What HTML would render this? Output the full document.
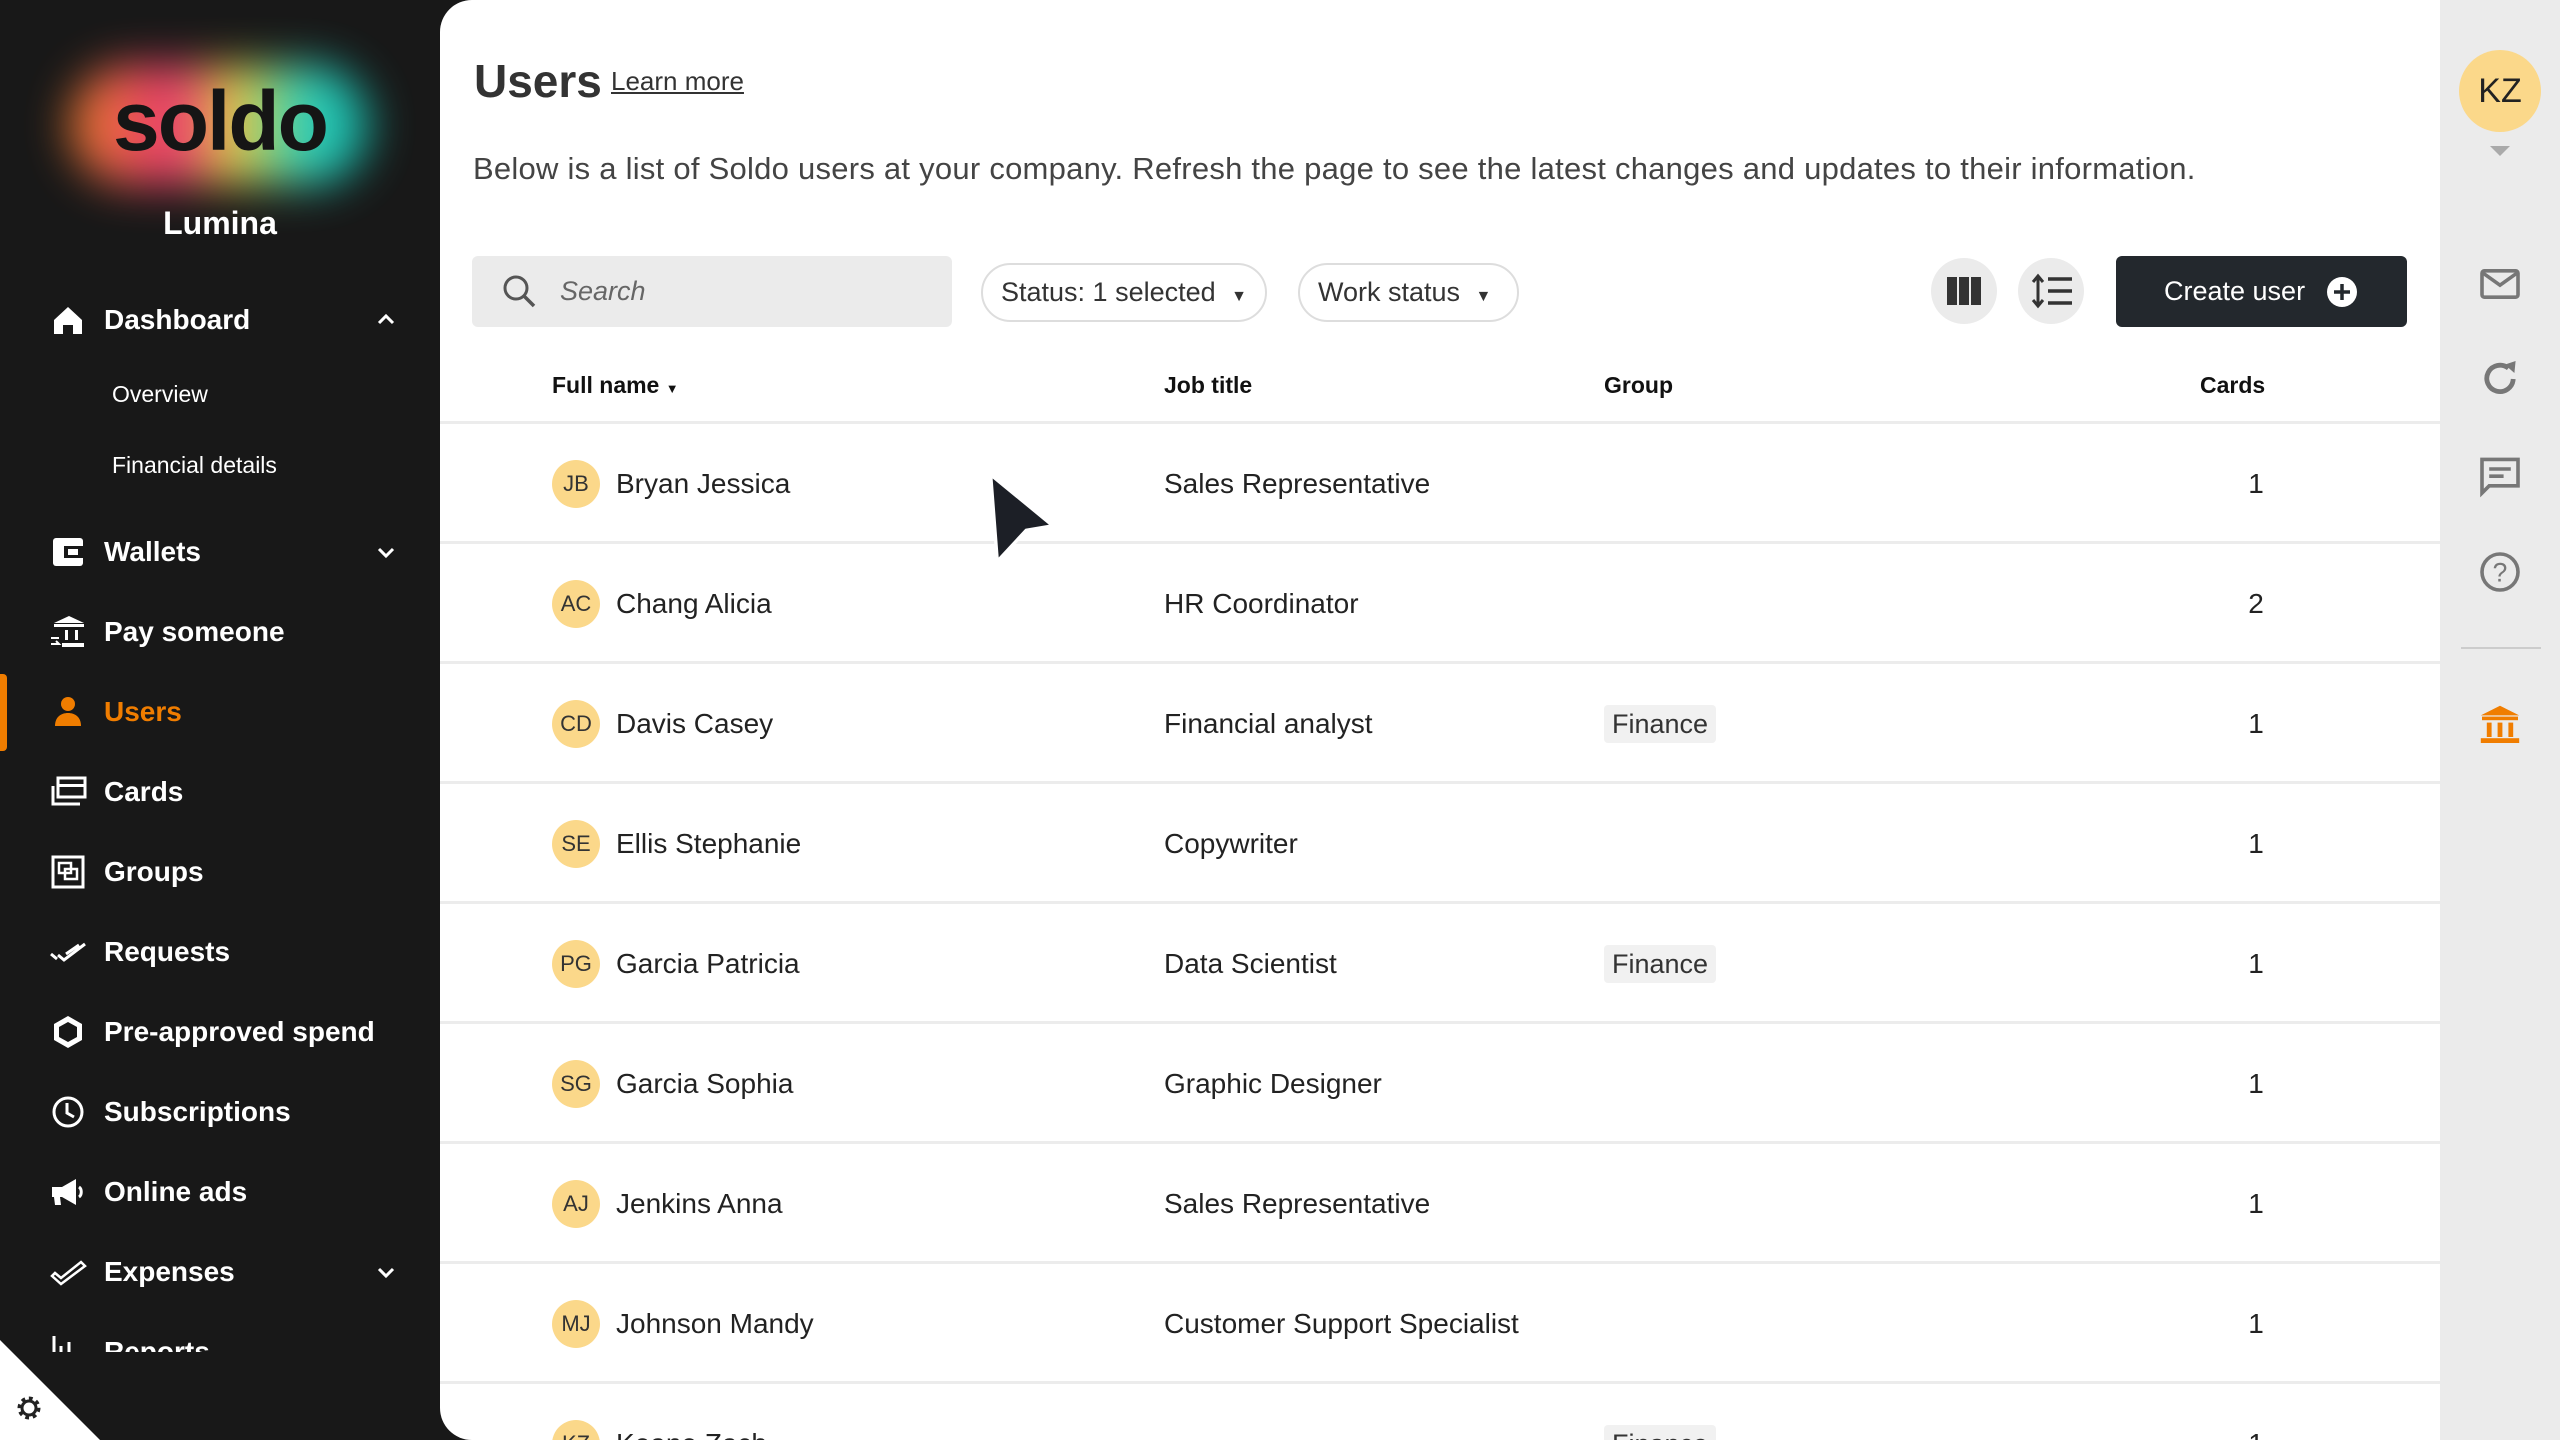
<!DOCTYPE html>
<html><head><meta charset="utf-8"><style>
*{margin:0;padding:0;box-sizing:border-box}
body{width:2560px;height:1440px;overflow:hidden;background:#181818;font-family:"Liberation Sans",sans-serif;position:relative}
.a{position:absolute}
#side{left:0;top:0;width:440px;height:1440px;background:#181818;overflow:hidden}
.nav{position:absolute;left:104px;color:#fff;font-weight:bold;font-size:28px;line-height:40px}
.ic{position:absolute;left:48px;width:40px;height:40px}
.chev{position:absolute;left:372px;width:28px;height:28px}
.sub{position:absolute;left:112px;color:#fff;font-size:23px;line-height:30px}
#main{left:440px;top:0;width:2002px;height:1440px;background:#fff;border-radius:32px 0 0 32px;overflow:hidden}
#right{left:2440px;top:0;width:120px;height:1440px;background:#ebebeb}
.row{position:absolute;left:0;width:2002px;height:120px;border-bottom:3px solid #ececec}
.av{position:absolute;left:112px;top:36px;width:48px;height:48px;border-radius:50%;background:#fbd88a;color:#333;font-size:22px;text-align:center;line-height:48px}
.nm{position:absolute;left:176px;top:44px;font-size:28px;color:#222}
.jt{position:absolute;left:724px;top:44px;font-size:28px;color:#222}
.cd{position:absolute;left:1801px;top:44px;width:30px;text-align:center;font-size:28px;color:#222}
.tag{position:absolute;left:1164px;top:41px;height:38px;padding:0 8px;background:#f1f1f1;font-size:27px;color:#333;line-height:38px;border-radius:4px}
.hd{position:absolute;top:372px;font-size:23px;font-weight:bold;color:#111}
.pill{position:absolute;top:263px;height:59px;border:2px solid #ddd;border-radius:30px;font-size:27px;color:#333;line-height:55px;padding-left:18px}
.ri{position:absolute;left:2476px;width:48px;height:48px}
</style></head><body>
<div id="side" class="a">
  <div class="a" style="left:70px;top:65px;width:300px;height:120px;border-radius:60px;background:linear-gradient(90deg,#ff8a2a,#ff3b7a 35%,#f5e04a 55%,#2be4d0 80%,#14b7a8);filter:blur(22px);opacity:.9"></div>
  <div class="a" style="left:0;top:76px;width:440px;text-align:center;font-size:84px;font-weight:bold;color:#151515;letter-spacing:-2px;line-height:90px">soldo</div>
  <div class="a" style="left:0;top:205px;width:440px;text-align:center;font-size:32px;font-weight:bold;color:#fff">Lumina</div>

  <svg class="ic" style="top:300px" viewBox="0 0 40 40"><path d="M6 20L20 7l14 13v14h-9v-9h-10v9H6z" fill="#fff"/></svg>
  <div class="nav" style="top:300px">Dashboard</div>
  <svg class="chev" style="top:306px" viewBox="0 0 28 28"><path d="M7 17l7-7 7 7" stroke="#fff" stroke-width="3" fill="none"/></svg>
  <div class="sub" style="top:379px">Overview</div>
  <div class="sub" style="top:450px">Financial details</div>

  <svg class="ic" style="top:532px" viewBox="0 0 40 40"><rect x="5" y="6" width="30" height="28" rx="3" fill="#fff"/><rect x="16" y="14" width="19" height="12" fill="#181818"/><rect x="20" y="17" width="10" height="6" fill="#fff"/></svg>
  <div class="nav" style="top:532px">Wallets</div>
  <svg class="chev" style="top:538px" viewBox="0 0 28 28"><path d="M7 11l7 7 7-7" stroke="#fff" stroke-width="3" fill="none"/></svg>

  <svg class="ic" style="top:612px" viewBox="0 0 40 40"><path d="M6 11L21 4l15 7z" fill="#fff"/><rect x="6" y="12" width="30" height="3" fill="#fff"/><rect x="17" y="18" width="3" height="10" fill="#fff"/><rect x="27" y="18" width="3" height="10" fill="#fff"/><rect x="14" y="31" width="22" height="4" fill="#fff"/><path d="M3 26h8M3 32h8l-3-3" stroke="#fff" stroke-width="2" fill="none"/></svg>
  <div class="nav" style="top:612px">Pay someone</div>

  <div class="a" style="left:0;top:674px;width:7px;height:77px;background:#f07d00;border-radius:0 4px 4px 0"></div>
  <svg class="ic" style="top:692px" viewBox="0 0 40 40"><circle cx="20" cy="12" r="7" fill="#f07d00"/><path d="M7 34c0-9 6-13 13-13s13 4 13 13z" fill="#f07d00"/></svg>
  <div class="nav" style="top:692px;color:#f07d00">Users</div>

  <svg class="ic" style="top:772px" viewBox="0 0 40 40"><rect x="10" y="6" width="27" height="19" fill="none" stroke="#fff" stroke-width="3"/><rect x="10" y="12" width="27" height="3" fill="#fff"/><path d="M5 14v18h27" stroke="#fff" stroke-width="3" fill="none"/></svg>
  <div class="nav" style="top:772px">Cards</div>

  <svg class="ic" style="top:852px" viewBox="0 0 40 40"><rect x="5" y="5" width="30" height="30" fill="none" stroke="#fff" stroke-width="3"/><rect x="11" y="11" width="12" height="10" fill="none" stroke="#fff" stroke-width="2.5"/><rect x="17" y="17" width="12" height="10" fill="none" stroke="#fff" stroke-width="2.5"/></svg>
  <div class="nav" style="top:852px">Groups</div>

  <svg class="ic" style="top:932px" viewBox="0 0 40 40"><path d="M3 22l6 5M10 23l6 5L37 12M18 22l13-9" stroke="#fff" stroke-width="3" fill="none"/></svg>
  <div class="nav" style="top:932px">Requests</div>

  <svg class="ic" style="top:1012px" viewBox="0 0 40 40"><path d="M20 4l14 8v16l-14 8-14-8V12z" fill="#fff"/><path d="M20 10l9 5v10l-9 5-9-5V15z" fill="#181818"/></svg>
  <div class="nav" style="top:1012px">Pre-approved spend</div>

  <svg class="ic" style="top:1092px" viewBox="0 0 40 40"><circle cx="20" cy="20" r="14" fill="none" stroke="#fff" stroke-width="3"/><path d="M19 11v10l7 4" stroke="#fff" stroke-width="3" fill="none"/></svg>
  <div class="nav" style="top:1092px">Subscriptions</div>

  <svg class="ic" style="top:1172px" viewBox="0 0 40 40"><path d="M4 15h10l14-8v26l-14-8h-2l1 8H7l-1-8H4z" fill="#fff"/><path d="M31 15c3 2 3 8 0 10" stroke="#fff" stroke-width="3" fill="none"/></svg>
  <div class="nav" style="top:1172px">Online ads</div>

  <svg class="ic" style="top:1252px" viewBox="0 0 40 40"><path d="M4 24l9 8L37 14l-4-4-20 16-6-5z" fill="none" stroke="#fff" stroke-width="2.5"/></svg>
  <div class="nav" style="top:1252px">Expenses</div>
  <svg class="chev" style="top:1258px" viewBox="0 0 28 28"><path d="M7 11l7 7 7-7" stroke="#fff" stroke-width="3" fill="none"/></svg>

  <div class="a" style="left:0;top:1332px;width:440px;height:20px;overflow:hidden">
    <div class="nav" style="top:0">Reports</div>
    <svg class="ic" style="top:0" viewBox="0 0 40 40"><path d="M6 4v30M13 14v20M21 10v24" stroke="#fff" stroke-width="3"/></svg>
  </div>
  <svg class="a" style="left:0;top:1340px" width="100" height="100" viewBox="0 0 100 100"><path d="M0 0L100 100H0z" fill="#fff"/></svg>
  <svg class="a" style="left:15px;top:1394px" width="28" height="28" viewBox="0 0 28 28"><circle cx="14" cy="14" r="9" fill="none" stroke="#222" stroke-width="5" stroke-dasharray="3.5 3.5"/><circle cx="14" cy="14" r="7" fill="none" stroke="#222" stroke-width="3"/></svg>
</div>

<div id="main" class="a">
  <div class="a" style="left:34px;top:54px;font-size:46px;font-weight:bold;color:#333">Users</div>
  <div class="a" style="left:171px;top:66px;font-size:26px;color:#333;text-decoration:underline">Learn more</div>
  <div class="a" style="left:33px;top:151px;font-size:31px;color:#444;letter-spacing:0.25px">Below is a list of Soldo users at your company. Refresh the page to see the latest changes and updates to their information.</div>

  <div class="a" style="left:32px;top:256px;width:480px;height:71px;background:#ebebeb;border-radius:6px"></div>
  <svg class="a" style="left:60px;top:272px" width="40" height="40" viewBox="0 0 40 40"><circle cx="16" cy="16" r="11" fill="none" stroke="#555" stroke-width="3"/><path d="M24 24l10 10" stroke="#555" stroke-width="3.5"/></svg>
  <div class="a" style="left:120px;top:276px;font-size:27px;font-style:italic;color:#666">Search</div>

  <div class="pill" style="left:541px;width:286px">Status: 1 selected <span style="font-size:16px;margin-left:8px">▼</span></div>
  <div class="pill" style="left:858px;width:221px">Work status <span style="font-size:16px;margin-left:8px">▼</span></div>

  <div class="a" style="left:1491px;top:258px;width:66px;height:66px;border-radius:50%;background:#ebebeb"></div>
  <svg class="a" style="left:1505px;top:274px" width="38" height="34" viewBox="0 0 38 34"><rect x="2" y="3" width="10" height="28" fill="#333"/><rect x="14" y="3" width="10" height="28" fill="#333"/><rect x="26" y="3" width="10" height="28" fill="#333"/></svg>
  <div class="a" style="left:1578px;top:258px;width:66px;height:66px;border-radius:50%;background:#ebebeb"></div>
  <svg class="a" style="left:1590px;top:272px" width="44" height="38" viewBox="0 0 44 38"><path d="M8 4v30M3 10l5-6 5 6M3 28l5 6 5-6" stroke="#333" stroke-width="3" fill="none"/><path d="M18 7h24M18 19h24M18 31h24" stroke="#333" stroke-width="3.5"/></svg>

  <div class="a" style="left:1676px;top:256px;width:291px;height:71px;background:#23282d;border-radius:6px;color:#fff;font-size:27px;line-height:71px;padding-left:48px">Create user</div>
  <svg class="a" style="left:1886px;top:276px" width="32" height="32" viewBox="0 0 32 32"><circle cx="16" cy="16" r="15" fill="#fff"/><path d="M16 8v16M8 16h16" stroke="#23282d" stroke-width="3.5"/></svg>

  <div class="hd" style="left:112px">Full name <span style="font-size:13px">▼</span></div>
  <div class="hd" style="left:724px">Job title</div>
  <div class="hd" style="left:1164px">Group</div>
  <div class="hd" style="left:1760px">Cards</div>
  <div class="a" style="left:0;top:421px;width:2002px;height:3px;background:#ececec"></div>

  <div class="row" style="top:424px"><div class="av">JB</div><div class="nm">Bryan Jessica</div><div class="jt">Sales Representative</div><div class="cd">1</div></div>
  <div class="row" style="top:544px"><div class="av">AC</div><div class="nm">Chang Alicia</div><div class="jt">HR Coordinator</div><div class="cd">2</div></div>
  <div class="row" style="top:664px"><div class="av">CD</div><div class="nm">Davis Casey</div><div class="jt">Financial analyst</div><div class="tag">Finance</div><div class="cd">1</div></div>
  <div class="row" style="top:784px"><div class="av">SE</div><div class="nm">Ellis Stephanie</div><div class="jt">Copywriter</div><div class="cd">1</div></div>
  <div class="row" style="top:904px"><div class="av">PG</div><div class="nm">Garcia Patricia</div><div class="jt">Data Scientist</div><div class="tag">Finance</div><div class="cd">1</div></div>
  <div class="row" style="top:1024px"><div class="av">SG</div><div class="nm">Garcia Sophia</div><div class="jt">Graphic Designer</div><div class="cd">1</div></div>
  <div class="row" style="top:1144px"><div class="av">AJ</div><div class="nm">Jenkins Anna</div><div class="jt">Sales Representative</div><div class="cd">1</div></div>
  <div class="row" style="top:1264px"><div class="av">MJ</div><div class="nm">Johnson Mandy</div><div class="jt">Customer Support Specialist</div><div class="cd">1</div></div>
  <div class="row" style="top:1384px"><div class="av">KZ</div><div class="nm">Keane Zach</div><div class="tag">Finance</div><div class="cd">1</div></div>

  <svg class="a" style="left:544px;top:470px" width="80" height="96" viewBox="0 0 72 86"><path d="M6 4l56 46-24 4-26 28z" fill="#1c1f26" stroke="#fff" stroke-width="3" stroke-linejoin="round"/></svg>
</div>

<div id="right" class="a">
  <div class="a" style="left:19px;top:50px;width:82px;height:82px;border-radius:50%;background:#fbd88a;color:#222;font-size:34px;text-align:center;line-height:82px">KZ</div>
  <svg class="a" style="left:50px;top:146px" width="20" height="12" viewBox="0 0 20 12"><path d="M0 0h20L10 10z" fill="#aaa"/></svg>
</div>
<svg class="ri" style="top:260px" viewBox="0 0 40 40"><rect x="5" y="9" width="30" height="22" rx="2" fill="none" stroke="#777" stroke-width="3"/><path d="M6 11l14 10 14-10" stroke="#777" stroke-width="3" fill="none"/></svg>
<svg class="ri" style="top:355px" viewBox="0 0 40 40"><path d="M31 20a11 11 0 1 1-4-9" stroke="#777" stroke-width="4" fill="none"/><path d="M24 8l9-3-1 10z" fill="#777"/></svg>
<svg class="ri" style="top:451px" viewBox="0 0 40 40"><path d="M5 7h30v22H11l-6 6z" fill="none" stroke="#777" stroke-width="3"/><path d="M11 15h18M11 21h12" stroke="#777" stroke-width="3"/></svg>
<svg class="ri" style="top:548px" viewBox="0 0 40 40"><circle cx="20" cy="20" r="15" fill="none" stroke="#777" stroke-width="3"/><text x="20" y="28" text-anchor="middle" font-size="22" font-family="Liberation Sans" fill="#777">?</text></svg>
<div class="a" style="left:2461px;top:647px;width:80px;height:2px;background:#ccc"></div>
<svg class="ri" style="top:701px" viewBox="0 0 40 40"><path d="M4 12L20 4l16 8z" fill="#f07d00"/><rect x="5" y="13" width="30" height="3" fill="#f07d00"/><rect x="9" y="18" width="4" height="12" fill="#f07d00"/><rect x="18" y="18" width="4" height="12" fill="#f07d00"/><rect x="27" y="18" width="4" height="12" fill="#f07d00"/><rect x="4" y="31" width="32" height="4" fill="#f07d00"/></svg>
</body></html>
